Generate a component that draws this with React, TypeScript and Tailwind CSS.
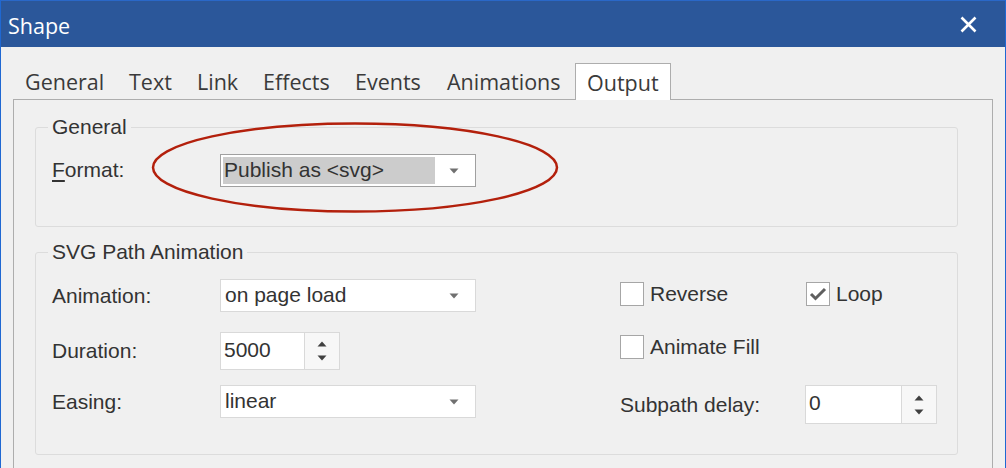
import type { ReactNode } from 'react';

const sans = "font-['Liberation_Sans',Arial,sans-serif]";
const ui = "font-['Open_Sans','Noto_Sans',sans-serif]";

function Arrow() {
  return (
    <svg width="10" height="6" viewBox="0 0 10 6" className="shrink-0">
      <path d="M0.5 0.5 H9.5 L5 5.5 Z" fill="#707070" />
    </svg>
  );
}

function Combo({ value, focused = false }: { value: string; focused?: boolean }) {
  return (
    <div
      className={`flex h-[33px] w-[256px] items-center whitespace-nowrap bg-white pr-[16px] ${
        focused ? 'border border-[#a0a0a0] p-[2px]' : 'border border-[#d9d9d9] pl-[3px]'
      }`}
    >
      <div
        className={`flex h-full flex-1 items-center pb-[1px] pl-[1px] ${
          focused ? 'mr-[14px] bg-[#cccccc]' : ''
        }`}
      >
        {value}
      </div>
      <Arrow />
    </div>
  );
}

function Spin({ value, inputW, h }: { value: string; inputW: string; h: string }) {
  return (
    <div className={`flex ${h}`}>
      <div className={`${inputW} flex items-center border border-[#d9d9d9] bg-white pb-[3px] pl-[3px]`}>
        {value}
      </div>
      <div className="flex w-[35px] flex-col items-center justify-center gap-[8px] border border-l-0 border-[#d9d9d9] bg-[#f7f7f7]">
        <svg width="10" height="6" viewBox="0 0 10 6">
          <path d="M0.5 5.5 H9.5 L5 0.5 Z" fill="#404040" />
        </svg>
        <svg width="10" height="6" viewBox="0 0 10 6">
          <path d="M0.5 0.5 H9.5 L5 5.5 Z" fill="#404040" />
        </svg>
      </div>
    </div>
  );
}

function Check({ label, checked = false }: { label: string; checked?: boolean }) {
  return (
    <div className="flex h-[24px] items-center gap-[6px] leading-[24px]">
      <div className="flex h-[24px] w-[24px] items-center justify-center border border-[#a6a6a6] bg-white">
        {checked && (
          <svg width="18" height="14" viewBox="0 0 18 14">
            <path d="M2 7 L6.5 11.5 L16 2" fill="none" stroke="#5f5f5f" strokeWidth="3" />
          </svg>
        )}
      </div>
      <span>{label}</span>
    </div>
  );
}

function Group({ title, className, children }: { title: string; className: string; children: ReactNode }) {
  return (
    <div className={`relative ml-[21px] w-[923px] rounded-[3px] border border-[#dcdcdc] ${className}`}>
      <span className="absolute left-[12px] top-[-13px] bg-[#f0f0f0] px-[4px] leading-[24px]">{title}</span>
      {children}
    </div>
  );
}

export default function App() {
  const tabs = [
    { t: 'General', w: 'w-[104px]' },
    { t: 'Text', w: 'w-[68px]' },
    { t: 'Link', w: 'w-[66px]' },
    { t: 'Effects', w: 'w-[92px]' },
    { t: 'Events', w: 'w-[92px]' },
    { t: 'Animations', w: 'w-[140px]' },
  ];

  return (
    <div className={`relative h-[468px] w-[1006px] overflow-hidden border-x border-[#1f68d2] bg-[#f0f0f0] text-[21px] text-[#333] ${sans}`}>
      {/* title bar */}
      <div className="flex h-[47px] items-center justify-between border-t border-[#2a68c8] bg-[#2b579a] pl-[7px] pr-[28px] text-white">
        <span className={`${ui} pt-[4px] text-[21.5px]`}>Shape</span>
        <svg width="17" height="17" viewBox="0 0 17 17">
          <path d="M1.5 1.5 L15.5 15.5 M15.5 1.5 L1.5 15.5" stroke="#fff" strokeWidth="2.6" />
        </svg>
      </div>

      <div className="px-[12px]">
        {/* tabs */}
        <div className={`flex h-[36px] items-center ${ui} mt-[16px] text-[21.5px] text-[#3a3a3a]`}>
          {tabs.map((tab) => (
            <div key={tab.t} className={`${tab.w} pl-[12px] pt-[3px]`}>
              {tab.t}
            </div>
          ))}
          <div className="relative z-10 mb-[-1px] flex h-[37px] w-[96px] items-center self-end border border-b-0 border-[#adadad] bg-white pl-[11px] pt-[2px]">
            Output
          </div>
        </div>

        {/* panel */}
        <div className="h-[400px] border-x border-t border-[#adadad]">
          <Group title="General" className="mt-[27px] h-[100px]">
            <div className="mt-[26px] flex items-center pl-[16px]">
              <span className="w-[168px] pb-[1px]">
                <u className="underline-offset-[3px]">F</u>ormat:
              </span>
              <Combo value="Publish as <svg>" focused />
            </div>
          </Group>

          <Group title="SVG Path Animation" className="mt-[25px] h-[203px]">
            <div className="flex">
              <div className="w-[440px] pl-[16px]">
                <div className="mt-[26px] flex items-center">
                  <span className="w-[168px]">Animation:</span>
                  <Combo value="on page load" />
                </div>
                <div className="mt-[20px] flex items-center">
                  <span className="w-[168px]">Duration:</span>
                  <Spin value="5000" inputW="w-[85px]" h="h-[38px]" />
                </div>
                <div className="mt-[15px] flex items-center">
                  <span className="w-[168px]">Easing:</span>
                  <Combo value="linear" />
                </div>
              </div>

              <div className="ml-[144px]">
                <div className="mt-[29px] flex">
                  <div className="w-[186px]">
                    <Check label="Reverse" />
                  </div>
                  <Check label="Loop" checked />
                </div>
                <div className="mt-[29px]">
                  <Check label="Animate Fill" />
                </div>
                <div className="mt-[26px] flex h-[39px] items-center">
                  <span className="w-[185px]">Subpath delay:</span>
                  <Spin value="0" inputW="w-[97px]" h="h-[39px]" />
                </div>
              </div>
            </div>
          </Group>
        </div>
      </div>

      {/* red annotation ellipse */}
      <svg className="absolute left-[149px] top-[120px]" width="412" height="96" viewBox="0 0 412 96">
        <ellipse cx="205" cy="47.5" rx="202" ry="44" fill="none" stroke="#b3200c" strokeWidth="2.5" />
      </svg>
    </div>
  );
}
